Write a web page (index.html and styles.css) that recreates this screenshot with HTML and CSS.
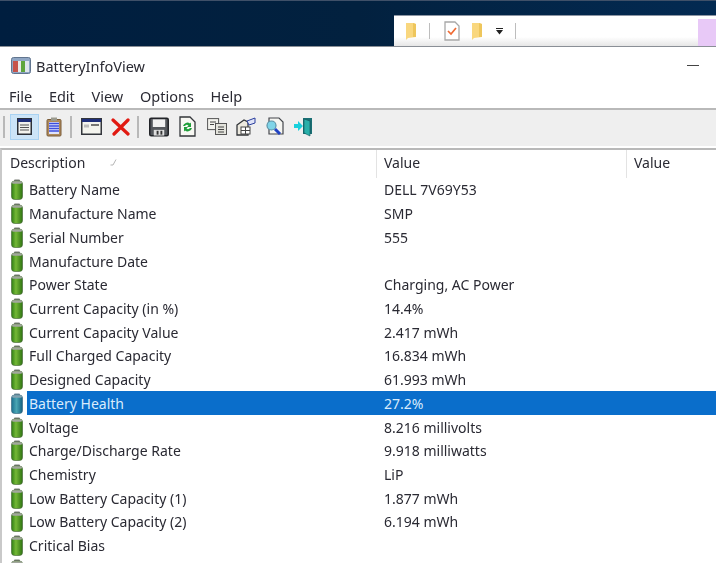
FILE: index.html
```html
<!DOCTYPE html>
<html lang="en">
<head>
  <meta charset="UTF-8">
  <title>BatteryInfoView</title>
  <link rel="stylesheet" href="styles.css">
</head>
<body>
  <svg class="defs" width="0" height="0">
    <defs>
      <linearGradient id="cell" x1="0" x2="1" y1="0" y2="0">
        <stop offset="0" stop-color="#2f7d14"/>
        <stop offset="0.4" stop-color="#74b836"/>
        <stop offset="1" stop-color="#2f7412"/>
      </linearGradient>
      <linearGradient id="cellSel" x1="0" x2="1" y1="0" y2="0">
        <stop offset="0" stop-color="#1c6f8e"/>
        <stop offset="0.45" stop-color="#4aa6b4"/>
        <stop offset="1" stop-color="#17607f"/>
      </linearGradient>
      <symbol id="battery" viewBox="0 0 14 21">
        <rect x="4" y="0.5" width="6" height="3" rx="1" fill="#7c8079"/>
        <rect x="1.5" y="2" width="11" height="18.5" rx="3" fill="url(#cell)" stroke="#3f6030" stroke-width="0.6"/>
        <rect x="2" y="2.2" width="10" height="2.6" rx="1.3" fill="#a3a79e"/>
      </symbol>
      <symbol id="batterySel" viewBox="0 0 14 21">
        <rect x="4" y="0.5" width="6" height="3" rx="1" fill="#6f8b99"/>
        <rect x="1.5" y="2" width="11" height="18.5" rx="3" fill="url(#cellSel)" stroke="#2f5f78" stroke-width="0.6"/>
        <rect x="2" y="2.2" width="10" height="2.6" rx="1.3" fill="#83a2b0"/>
      </symbol>
    </defs>
  </svg>

  <div class="desktop">
    <div class="explorer-bar">
      <svg class="folder" width="13" height="19" viewBox="0 0 13 19"><path d="M1 1h7l3 1v13l-8 1-2 2z" fill="#f9d77e"/><path d="M8 1l3 1v13H8z" fill="#eec65c"/></svg>
      <span class="bar-sep"></span>
      <svg class="note" width="16" height="20" viewBox="0 0 16 20"><path d="M1 1h10l4 4v14H1z" fill="#fff" stroke="#a8a8a8" stroke-width="1.3"/><path d="M4 10l3 3 5-6" fill="none" stroke="#ef6a33" stroke-width="1.7"/></svg>
      <svg class="folder" width="13" height="19" viewBox="0 0 13 19"><path d="M1 1h7l3 1v13l-8 1-2 2z" fill="#f9d77e"/><path d="M8 1l3 1v13H8z" fill="#eec65c"/></svg>
      <svg class="caret" width="7" height="7" viewBox="0 0 7 7"><path d="M0 0h7v1H0zM0 2h7L3.500 6.500z" fill="#222"/></svg>
      <span class="bar-sep"></span>
      <span class="bar-tab"></span>
    </div>
  </div>

  <div class="window">
    <div class="titlebar">
      <svg class="app-icon" width="20" height="17" viewBox="0 0 20 17">
        <rect x="0.500" y="0.500" width="19" height="16" rx="2" fill="#8fa6c4" stroke="#61758f"/>
        <rect x="2" y="4" width="5" height="11" fill="#c6534b"/>
        <rect x="7" y="4" width="3" height="11" fill="#e8e8e8"/>
        <rect x="10" y="4" width="4" height="11" fill="#5fa53c"/>
        <rect x="14" y="4" width="4" height="11" fill="#dfe5ec"/>
      </svg>
      <span class="app-title">BatteryInfoView</span>
      <span class="minimize"></span>
    </div>

    <nav class="menu">
      <span>File</span>
      <span>Edit</span>
      <span>View</span>
      <span>Options</span>
      <span>Help</span>
    </nav>

    <div class="toolbar">
      <span class="tool-sep"></span>
      <button class="tool active">
        <svg width="15" height="17" viewBox="0 0 15 17"><rect x="0.750" y="0.750" width="13.500" height="15.500" fill="#f3f3ee" stroke="#2b3038" stroke-width="1.500"/><rect x="1" y="1" width="13" height="3" fill="#1f2f7a"/><path d="M3 7h9M3 9.500h9M3 12h9" stroke="#555" stroke-width="1.200"/></svg>
      </button>
      <button class="tool">
        <svg width="16" height="20" viewBox="0 0 16 20"><rect x="1" y="2.500" width="14" height="16.500" rx="1" fill="#b08a5a" stroke="#7b5d3a"/><rect x="3" y="5" width="10" height="12" fill="#dfe3fb"/><path d="M3 6.500h10M3 9h10M3 11.500h10M3 14h10" stroke="#3c4de0" stroke-width="1.300"/><rect x="5" y="0.500" width="6" height="3.500" fill="#9a9a8e"/></svg>
      </button>
      <span class="tool-sep"></span>
      <button class="tool">
        <svg width="21" height="17" viewBox="0 0 21 17"><rect x="0.750" y="0.750" width="19.500" height="15.500" fill="#f4f4ee" stroke="#33363c" stroke-width="1.500"/><rect x="1" y="1" width="19" height="3" fill="#1f2f7a"/><path d="M3 6.500h5v3H3z" fill="#bcbcbc"/><path d="M10 7h8" stroke="#333" stroke-width="1.300"/></svg>
      </button>
      <button class="tool">
        <svg width="19" height="18" viewBox="0 0 19 18"><path d="M2 2l15 14M17 2L3 16" stroke="#e11a12" stroke-width="3.200" stroke-linecap="round"/></svg>
      </button>
      <span class="tool-sep"></span>
      <button class="tool">
        <svg width="20" height="20" viewBox="0 0 21 20"><rect x="0.800" y="0.800" width="19.400" height="18.400" rx="1.500" fill="#55585d" stroke="#222428" stroke-width="1.600"/><rect x="4" y="2" width="13" height="8" fill="#f1f1f1"/><rect x="5" y="13" width="11" height="6" fill="#dedede"/><rect x="8" y="14" width="2" height="4" fill="#333"/><rect x="12" y="14" width="2" height="4" fill="#333"/></svg>
      </button>
      <button class="tool">
        <svg width="17" height="21" viewBox="0 0 17 21"><path d="M1 1h10l5 5v14H1z" fill="#f8f8f3" stroke="#33363a" stroke-width="1.300"/><path d="M4 10a4.500 4.500 0 0 1 7-2.500l1-1v4.500H8l1.500-1.500A2.500 2.500 0 0 0 6 10z" fill="#1f9e3a"/><path d="M13 12a4.500 4.500 0 0 1-7 2.500l-1 1V11h4l-1.500 1.500A2.500 2.500 0 0 0 11 12z" fill="#1f9e3a"/></svg>
      </button>
      <button class="tool">
        <svg width="20" height="17" viewBox="0 0 20 17"><rect x="0.600" y="0.600" width="11" height="11" fill="#f3f3ee" stroke="#555"/><rect x="8.500" y="5.500" width="11" height="11" fill="#e3e3dc" stroke="#555"/><path d="M3 4h6M3 6.500h4M11 9h6M11 11.500h6M11 14h6" stroke="#444"/></svg>
      </button>
      <button class="tool">
        <svg width="20" height="19" viewBox="0 0 20 19"><path d="M1 8l7-5 4 2v13H1z" fill="#ece9df" stroke="#33363a" stroke-width="1.300"/><rect x="5" y="10" width="9" height="7" fill="#fff" stroke="#444"/><path d="M5 13.500h9M9.500 10v7" stroke="#444"/><path d="M11 4l8-3v5l-6 2z" fill="#dfe3f7" stroke="#2a3f9e"/></svg>
      </button>
      <button class="tool">
        <svg width="20" height="20" viewBox="0 0 20 20"><path d="M4 1h10l4 4v12H4z" fill="#f5f5f1" stroke="#44474c" stroke-width="1.200"/><circle cx="6.500" cy="8.500" r="4.500" fill="#7fd4e8" stroke="#5c93a8" stroke-width="1.200"/><path d="M10 12l5 5" stroke="#2143c4" stroke-width="3"/></svg>
      </button>
      <button class="tool">
        <svg width="20" height="20" viewBox="0 0 20 20"><path d="M9 1h9v16H9z" fill="#1a6f74"/><path d="M10 2l6 2v15l-6-3z" fill="#29b0aa" stroke="#125257" stroke-width="0.600"/><path d="M0 7h4V4l5 5-5 5v-3H0z" fill="#19d0dc"/></svg>
      </button>
    </div>

    <div class="list">
      <div class="list-head">
        <div class="col-desc">Description <svg class="sort" width="7" height="7" viewBox="0 0 7 7"><path d="M6 0.500L3 6H0.500" fill="none" stroke="#b5b5b5"/></svg></div>
        <div class="col-value">Value</div>
        <div class="col-extra">Value</div>
      </div>
      <div class="row"><svg class="cell"><use href="#battery"/></svg><span class="name">Battery Name</span><span class="val">DELL 7V69Y53</span></div>
      <div class="row"><svg class="cell"><use href="#battery"/></svg><span class="name">Manufacture Name</span><span class="val">SMP</span></div>
      <div class="row"><svg class="cell"><use href="#battery"/></svg><span class="name">Serial Number</span><span class="val">555</span></div>
      <div class="row"><svg class="cell"><use href="#battery"/></svg><span class="name">Manufacture Date</span><span class="val"></span></div>
      <div class="row"><svg class="cell"><use href="#battery"/></svg><span class="name">Power State</span><span class="val">Charging, AC Power</span></div>
      <div class="row"><svg class="cell"><use href="#battery"/></svg><span class="name">Current Capacity (in %)</span><span class="val">14.4%</span></div>
      <div class="row"><svg class="cell"><use href="#battery"/></svg><span class="name">Current Capacity Value</span><span class="val">2.417 mWh</span></div>
      <div class="row"><svg class="cell"><use href="#battery"/></svg><span class="name">Full Charged Capacity</span><span class="val">16.834 mWh</span></div>
      <div class="row"><svg class="cell"><use href="#battery"/></svg><span class="name">Designed Capacity</span><span class="val">61.993 mWh</span></div>
      <div class="row selected"><svg class="cell"><use href="#batterySel"/></svg><span class="name">Battery Health</span><span class="val">27.2%</span></div>
      <div class="row"><svg class="cell"><use href="#battery"/></svg><span class="name">Voltage</span><span class="val">8.216 millivolts</span></div>
      <div class="row"><svg class="cell"><use href="#battery"/></svg><span class="name">Charge/Discharge Rate</span><span class="val">9.918 milliwatts</span></div>
      <div class="row"><svg class="cell"><use href="#battery"/></svg><span class="name">Chemistry</span><span class="val">LiP</span></div>
      <div class="row"><svg class="cell"><use href="#battery"/></svg><span class="name">Low Battery Capacity (1)</span><span class="val">1.877 mWh</span></div>
      <div class="row"><svg class="cell"><use href="#battery"/></svg><span class="name">Low Battery Capacity (2)</span><span class="val">6.194 mWh</span></div>
      <div class="row"><svg class="cell"><use href="#battery"/></svg><span class="name">Critical Bias</span><span class="val"></span></div>
      <div class="row"><svg class="cell"><use href="#battery"/></svg><span class="name"></span><span class="val"></span></div>
    </div>
  </div>
</body>
</html>
```

FILE: styles.css
```css
* { box-sizing: border-box; }
html, body { margin: 0; height: 100%; overflow: hidden; }
body { font-family: "Noto Sans", "Open Sans", sans-serif; font-size: 14px; color: #2a2a33; background: #fff; width: 716px; height: 563px; filter: blur(0.4px); }
.defs { display: block; height: 0; }

.desktop { height: 47px; background: linear-gradient(90deg, #001e3f 0%, #02213f 50%, #032a52 100%); border-top: 1px solid #3f5068; display: flex; justify-content: flex-end; align-items: flex-end; border-bottom: 1px solid #8a8f96; }
.explorer-bar { width: 322px; height: 31px; background: linear-gradient(#fff 70%, #e6e6e6); border-top: 1px solid #8c95a3; display: flex; align-items: center; padding-left: 11px; position: relative; }
.explorer-bar .folder { flex: none; }
.bar-sep { width: 1px; height: 16px; background: #bdbdbd; margin: 0 14px 0 11px; flex: none; }
.note { flex: none; margin-right: 11px; }
.caret { flex: none; margin-left: 12px; margin-right: 1px; }
.bar-tab { width: 18px; align-self: stretch; background: #e8c9f7; margin-left: auto; margin-top: 3px; }

.titlebar { height: 37px; display: flex; align-items: center; padding-left: 11px; }
.app-icon { flex: none; }
.app-title { margin-left: 5px; font-size: 14.5px; }
.minimize { width: 12px; height: 1px; background: #444; margin-left: auto; margin-right: 17px; }

.menu { height: 26px; display: flex; gap: 16.7px; padding-left: 9px; align-items: center; font-size: 14.5px; border-bottom: 2px solid #b9b9b9; }

.toolbar { height: 36px; background: #efefef; display: flex; align-items: center; padding: 0 0 3px 1px; }
.tool-sep { width: 2px; height: 22px; background: #b8b8b8; margin: 0 5px 0 2px; flex: none; }
.tool { width: 29px; height: 26px; padding: 0; border: 1px solid transparent; background: none; display: flex; align-items: center; justify-content: center; flex: none; }
.tool.active { background: #cce4f7; border-color: #a9d2f2; }

.list { border-top: 2px solid #b9b9b9; border-left: 2px solid #c9c9c9; margin-top: 2px; background: #fff; }
.list-head { height: 28px; display: flex; align-items: center; }
.col-desc { width: 375px; height: 100%; padding: 0 0 3px 8px; display: flex; align-items: center; gap: 25px; border-right: 1px solid #e3e3e3; }
.sort { flex: none; }
.col-value { width: 250px; height: 100%; padding: 0 0 3px 7px; display: flex; align-items: center; border-right: 1px solid #e3e3e3; }
.col-extra { padding: 0 0 3px 7px; }

.row { height: 23.73px; display: flex; align-items: center; padding-left: 8px; }
.cell { width: 14px; height: 21px; flex: none; }
.name { margin-left: 3px; width: 357px; flex: none; height: 100%; display: flex; align-items: center; padding-left: 2px; }
.val { flex: 1; height: 100%; display: flex; align-items: center; }
.row.selected .name, .row.selected .val { background: #0a6ecb; color: #d9ebfb; }
```
